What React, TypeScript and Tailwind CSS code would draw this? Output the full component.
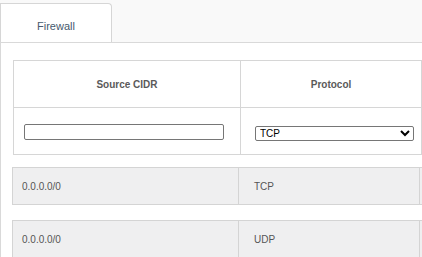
import React, { useState } from "react";

// Reglas de firewall de ejemplo
const rules = [
  { cidr: "0.0.0.0/0", protocol: "TCP" },
  { cidr: "0.0.0.0/0", protocol: "UDP" },
];

function App() {
  const [cidr, setCidr] = useState("");
  const [protocol, setProtocol] = useState("TCP");

  return (
    <div className="w-[422px] h-[257px] overflow-hidden bg-[#f9f9f9] font-['Liberation_Sans',Arial,sans-serif]">
      {/* Pestañas */}
      <div className="flex pt-[3px]">
        <div className="w-[112px] h-[39px] pt-[6px] flex items-center justify-center bg-white border border-b-0 border-[#d6d6d6] rounded-tr-[4px] text-[11px] text-[#46596e]">
          Firewall
        </div>
      </div>

      {/* Panel */}
      <div className="h-full bg-white border-l border-t border-[#d9d9d9] pl-[12px] pt-[17px]">
        <table className="w-[409px] border-collapse table-fixed">
          <colgroup>
            <col className="w-[227px]" />
            <col />
          </colgroup>
          <thead>
            <tr className="h-[47px]">
              <th className="border border-[#d6d6d6] text-[10px] font-bold text-[#5a5a5a] text-center align-middle">
                Source CIDR
              </th>
              <th className="border border-[#d6d6d6] text-[10px] font-bold text-[#5a5a5a] text-center align-middle">
                Protocol
              </th>
            </tr>
          </thead>
          <tbody>
            <tr className="h-[47px]">
              <td className="border border-[#d6d6d6] pl-[10px] pt-[1px] align-middle">
                <input
                  type="text"
                  value={cidr}
                  onChange={(e) => setCidr(e.target.value)}
                  className="block w-[200px] h-[16px] border border-[#767676] rounded-[2px] bg-white outline-none"
                />
              </td>
              <td className="border border-[#d6d6d6] pl-[14px] pt-[5px] align-middle">
                <select
                  value={protocol}
                  onChange={(e) => setProtocol(e.target.value)}
                  className="block w-[159px] h-[15px] border border-[#767676] rounded-[2px] bg-white text-[10px] text-black leading-none outline-none"
                >
                  <option value="TCP">TCP</option>
                  <option value="UDP">UDP</option>
                </select>
              </td>
            </tr>
          </tbody>
        </table>

        {/* Lista de reglas */}
        <div className="-ml-[1px] mt-[12px] flex flex-col gap-[15px]">
          {rules.map((rule, i) => (
            <div key={i} className="flex w-[440px] h-[38px] bg-[#efeff0] border border-[#d4d4d4] text-[10px] text-[#555555]">
              <div className="w-[225px] flex items-center pl-[9px] pt-[1px]">{rule.cidr}</div>
              <div className="w-[181px] flex items-center pl-[15px] pt-[1px] border-l border-[#d4d4d4]">{rule.protocol}</div>
              <div className="flex-1 border-l border-[#d4d4d4]"></div>
            </div>
          ))}
        </div>
      </div>
    </div>
  );
}

export default App;
